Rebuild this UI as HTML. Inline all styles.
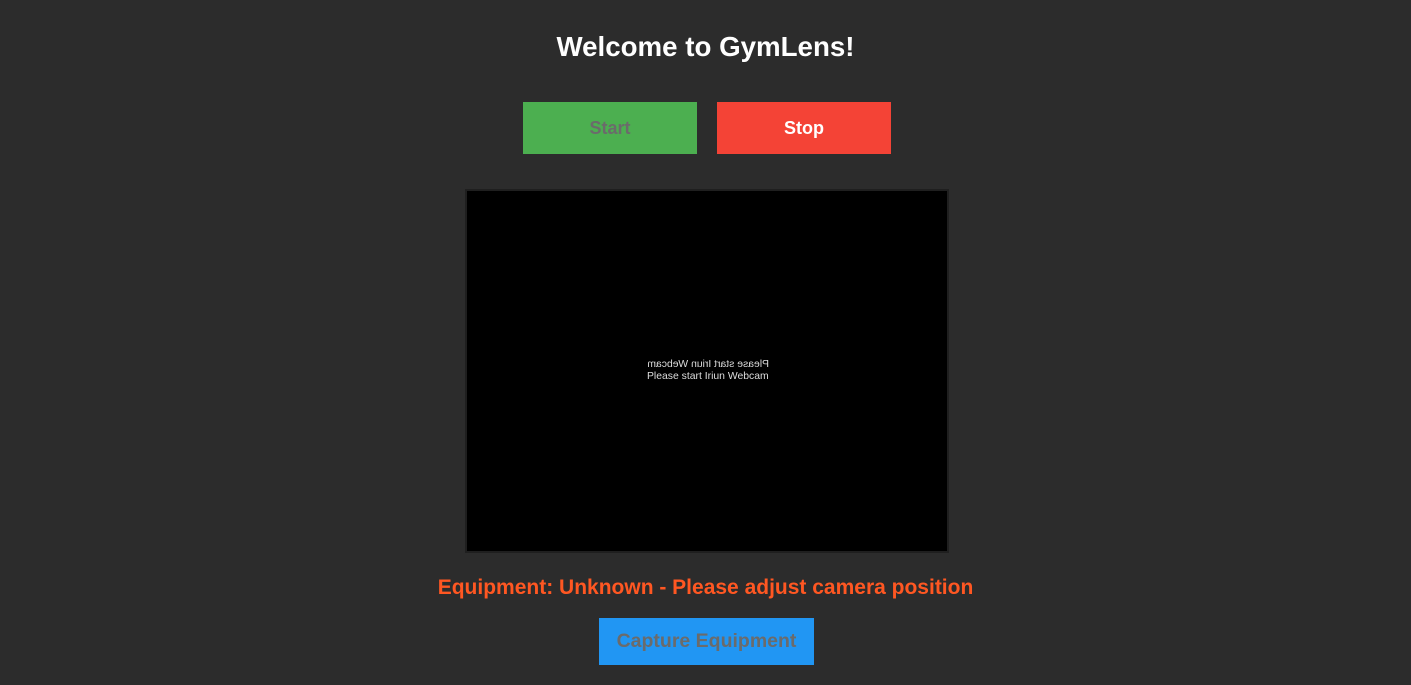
<!DOCTYPE html>
<html><head><style>
body{margin:0;width:1411px;height:685px;background:#2c2c2c;font-family:"Liberation Sans",sans-serif;position:relative;overflow:hidden}
.a{position:absolute}
h1{position:absolute;left:0;width:1411px;top:31px;margin:0;text-align:center;color:#fff;font-size:27.7px;font-weight:bold}
.btn{position:absolute;top:102px;width:174px;height:52px;line-height:52px;text-align:center;font-weight:bold;font-size:18px}
</style></head><body>
<h1>Welcome to GymLens!</h1>
<div class="btn" style="left:523px;background:#4caf50;color:#6b6b6b">Start</div>
<div class="btn" style="left:717px;background:#f44336;color:#fff">Stop</div>
<div class="a" style="left:465px;top:189px;width:480px;height:360px;border:2px solid #1f1f1f;background:#000"></div>
<div class="a" style="left:647px;top:359px;width:122px;font-size:10.4px;color:#ddd;line-height:12px;transform:scaleX(-1)">Please start Iriun Webcam</div>
<div class="a" style="left:647px;top:371px;width:122px;font-size:10.4px;color:#ddd;line-height:12px">Please start Iriun Webcam</div>
<div class="a" style="left:0;width:1411px;top:576px;text-align:center;color:#ff5722;font-weight:bold;font-size:21px">Equipment: Unknown - Please adjust camera position</div>
<div class="a" style="left:599px;top:618px;width:215px;height:47px;line-height:47px;background:#2196f3;color:#6b6b6b;text-align:center;font-weight:bold;font-size:19.5px">Capture Equipment</div>
</body></html>
